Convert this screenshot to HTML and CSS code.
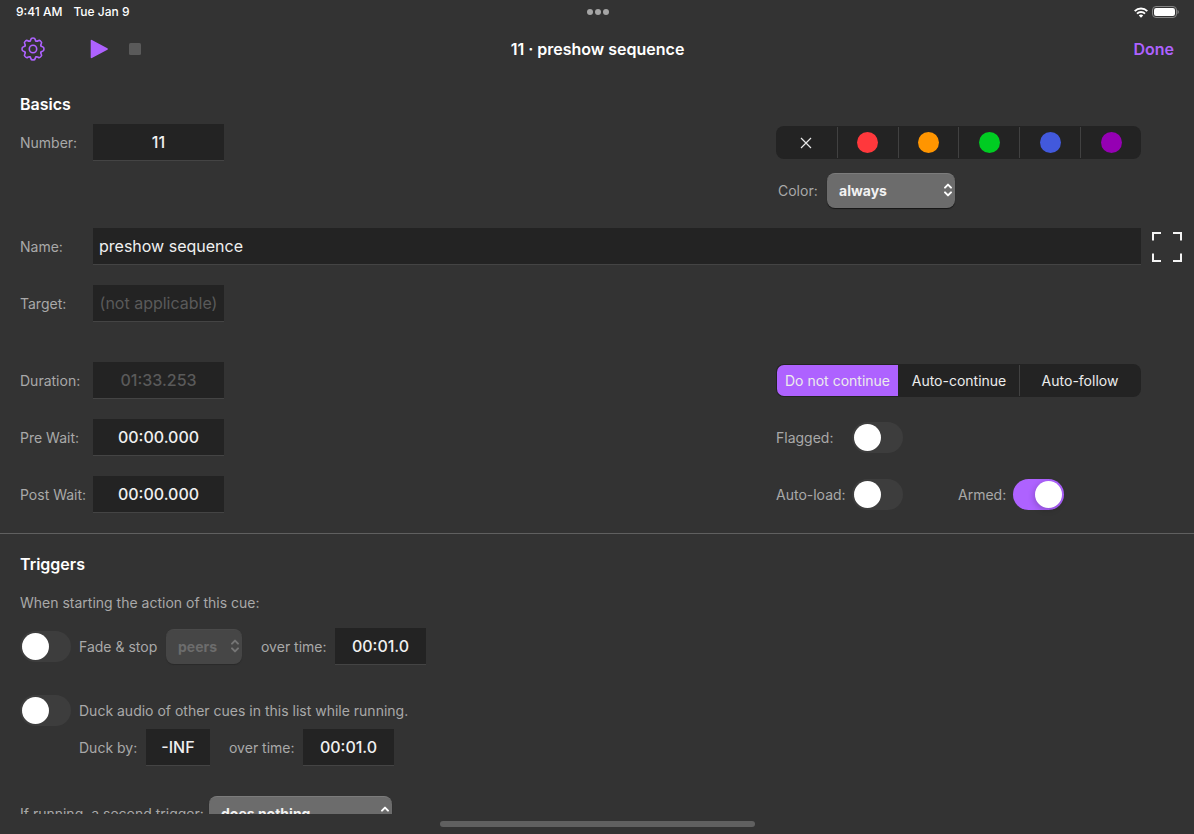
FILE: index.html
```html
<!DOCTYPE html>
<html lang="en">
<head>
<meta charset="utf-8">
<meta name="viewport" content="width=device-width, initial-scale=1">
<title>11 · preshow sequence</title>
<link rel="stylesheet" href="styles.css">
</head>
<body>
<svg class="defs" width="0" height="0" aria-hidden="true">
  <symbol id="chevrons" viewBox="0 0 10 16">
    <path d="M2 5.6 5 2.6l3 3M2 10.4l3 3 3-3" fill="none" stroke="currentColor" stroke-width="2" stroke-linecap="round" stroke-linejoin="round"/>
  </symbol>
  <symbol id="tooth" viewBox="-12 -12 24 24">
    <path d="M-3.250-7.850C-2.500-8.160-2.350-8.600-2.200-9.500-2-10.700-1.500-11 0-11S2-10.700 2.200-9.500C2.350-8.600 2.500-8.160 3.250-7.850" fill="none" stroke="currentColor" stroke-width="1.600" stroke-linecap="round"/>
  </symbol>
</svg>
<div class="screen">
  <div class="status">
    <div class="status-time"><span>9:41 AM</span><span>Tue Jan 9</span></div>
    <div class="dots"><i></i><i></i><i></i></div>
    <div class="status-icons">
      <svg width="14" height="11" viewBox="0 0 14 11" aria-hidden="true">
        <g fill="none" stroke="#fff" stroke-width="1.9">
          <path d="M.7 4.1a9 9 0 0 1 12.6 0"/>
          <path d="M3 6.6a5.7 5.7 0 0 1 8 0"/>
        </g>
        <path d="M7 10.8 4.8 8.5a3.2 3.2 0 0 1 4.4 0z" fill="#fff"/>
      </svg>
      <svg width="27" height="12" viewBox="0 0 27 12" aria-hidden="true">
        <rect x=".5" y=".5" width="24" height="11" rx="3.5" fill="none" stroke="#858585"/>
        <rect x="2" y="2" width="21" height="8" rx="2.2" fill="#fff"/>
        <path d="M25.5 4v4c.8-.3 1.3-1.100 1.300-2s-.5-1.700-1.300-2z" fill="#858585"/>
      </svg>
    </div>
  </div>

  <header class="toolbar">
    <div class="tools">
      <button class="icon-button" aria-label="Settings">
        <svg class="gear" width="24" height="24" viewBox="-12 -12 24 24" aria-hidden="true">
          <g>
            <use href="#tooth" x="-12" y="-12" width="24" height="24"/>
            <use href="#tooth" x="-12" y="-12" width="24" height="24" transform="rotate(45)"/>
            <use href="#tooth" x="-12" y="-12" width="24" height="24" transform="rotate(90)"/>
            <use href="#tooth" x="-12" y="-12" width="24" height="24" transform="rotate(135)"/>
            <use href="#tooth" x="-12" y="-12" width="24" height="24" transform="rotate(180)"/>
            <use href="#tooth" x="-12" y="-12" width="24" height="24" transform="rotate(225)"/>
            <use href="#tooth" x="-12" y="-12" width="24" height="24" transform="rotate(270)"/>
            <use href="#tooth" x="-12" y="-12" width="24" height="24" transform="rotate(315)"/>
          </g>
          <circle r="3.7" fill="none" stroke="currentColor" stroke-width="1.600"/>
        </svg>
      </button>
      <div class="transport">
        <button class="icon-button" aria-label="Play">
          <svg width="18" height="20" viewBox="0 0 18 20" aria-hidden="true"><path d="M1.500 1.600 17 10 1.500 18.400z" fill="currentColor" stroke="currentColor" stroke-width="1.600" stroke-linejoin="round"/></svg>
        </button>
        <button class="icon-button stop" aria-label="Stop" disabled>
          <svg width="12" height="12" viewBox="0 0 12 12" aria-hidden="true"><rect width="12" height="12" rx="1.500" fill="currentColor"/></svg>
        </button>
      </div>
    </div>
    <h1>11 · preshow sequence</h1>
    <button class="done">Done</button>
  </header>

  <main class="content">
    <section class="basics">
      <h2>Basics</h2>
      <div class="row row-top">
        <div class="field"><label for="number">Number:</label><input class="box" id="number" value="11"></div>
        <div class="side colors">
          <div class="swatches" role="group" aria-label="Cue color">
            <button aria-label="No color"><svg width="12" height="12" viewBox="0 0 12 12" aria-hidden="true"><path d="m1 1 10 10M11 1 1 11" stroke="#e8e8e8" stroke-width="1.200"/></svg></button>
            <button aria-label="Red"><span class="dot red"></span></button>
            <button aria-label="Orange"><span class="dot orange"></span></button>
            <button aria-label="Green"><span class="dot green"></span></button>
            <button aria-label="Blue"><span class="dot blue"></span></button>
            <button aria-label="Purple"><span class="dot purple"></span></button>
          </div>
          <div class="color-mode">
            <label for="color">Color:</label>
            <span class="picker picker-medium"><select id="color"><option>always</option></select><svg width="10" height="16"><use href="#chevrons"/></svg></span>
          </div>
        </div>
      </div>
      <div class="row name-row">
        <div class="field wide"><label for="name">Name:</label><input class="box text" id="name" value="preshow sequence"></div>
        <button class="expand" aria-label="Expand">
          <svg width="30" height="30" viewBox="0 0 30 30" aria-hidden="true"><path d="M1 8.500V1h8M21 1h8v7.500M29 21.500V29h-8M9 29H1v-7.500" fill="none" stroke="#f4f4f4" stroke-width="2"/></svg>
        </button>
      </div>
      <div class="row row-target">
        <div class="field"><label for="target">Target:</label><input class="box target" id="target" value="(not applicable)" disabled></div>
      </div>
      <div class="row">
        <div class="field"><label for="duration">Duration:</label><input class="box" id="duration" value="01:33.253" disabled></div>
        <div class="side segments" role="radiogroup" aria-label="Continue mode">
          <label><input type="radio" name="continue" checked><span>Do not continue</span></label>
          <label><input type="radio" name="continue"><span>Auto-continue</span></label>
          <label><input type="radio" name="continue"><span>Auto-follow</span></label>
        </div>
      </div>
      <div class="row">
        <div class="field"><label for="prewait">Pre Wait:</label><input class="box" id="prewait" value="00:00.000"></div>
        <div class="side switches">
          <label for="flagged">Flagged:</label><input class="switch" type="checkbox" role="switch" id="flagged">
        </div>
      </div>
      <div class="row">
        <div class="field"><label for="postwait">Post Wait:</label><input class="box" id="postwait" value="00:00.000"></div>
        <div class="side switches">
          <label for="autoload">Auto-load:</label><input class="switch" type="checkbox" role="switch" id="autoload">
          <label for="armed">Armed:</label><input class="switch" type="checkbox" role="switch" id="armed" checked>
        </div>
      </div>
    </section>

    <section class="triggers">
      <h2>Triggers</h2>
      <p>When starting the action of this cue:</p>
      <div class="line fade">
        <input class="switch" type="checkbox" role="switch" id="fade">
        <label for="fade">Fade &amp; stop</label>
        <span class="picker picker-small"><select aria-label="Fade and stop" disabled><option>peers</option></select><svg width="10" height="16"><use href="#chevrons"/></svg></span>
        <label class="over" for="fadetime">over time:</label>
        <input class="box time" id="fadetime" value="00:01.0">
      </div>
      <div class="line duck">
        <input class="switch" type="checkbox" role="switch" id="duck">
        <label for="duck">Duck audio of other cues in this list while running.</label>
      </div>
      <div class="line duck-values">
        <label class="by" for="duckby">Duck by:</label>
        <input class="box level" id="duckby" value="-INF">
        <label class="over" for="ducktime">over time:</label>
        <input class="box time" id="ducktime" value="00:01.0">
      </div>
      <div class="line second">
        <label for="second">If running, a second trigger:</label>
        <span class="picker picker-large"><select id="second"><option>does nothing</option></select><svg width="10" height="16"><use href="#chevrons"/></svg></span>
      </div>
    </section>
  </main>
  <footer class="home"><span></span></footer>
</div>
</body>
</html>
```
FILE: styles.css
```css
* { box-sizing: border-box; }

body {
  margin: 0;
  background: #333;
  color: #a9a9a9;
  font: 14px/20px Inter, "Liberation Sans", sans-serif;
}

button, input, select { font: inherit; color: inherit; margin: 0; }
button { padding: 0; border: 0; background: none; display: flex; align-items: center; justify-content: center; }
h1, h2, p { margin: 0; }
.defs { position: absolute; }

.screen { height: 100vh; display: flex; flex-direction: column; }

.status {
  display: grid;
  grid-template-columns: 1fr auto 1fr;
  align-items: center;
  height: 24px;
  padding: 0 15px 0 16px;
  color: #fff;
  font-size: 12px;
  font-weight: 500;
}
.status-time { display: flex; gap: 11px; }
.dots { display: flex; gap: 2px; }
.dots i { width: 6px; height: 6px; border-radius: 50%; background: #a5a5a5; }
.status-icons { display: flex; justify-content: flex-end; align-items: center; gap: 4px; }

.toolbar {
  display: grid;
  grid-template-columns: 1fr auto 1fr;
  align-items: center;
  height: 50px;
  padding: 0 20px 0 21px;
}
.tools { display: flex; align-items: center; gap: 45px; color: #ae62ff; }
.transport { display: flex; align-items: center; gap: 21px; }
.stop { color: #5a5a5a; }
.toolbar h1 { color: #fff; font-size: 16px; font-weight: 600; }
.done { justify-self: end; color: #ae62ff; font-size: 16px; font-weight: 600; }

.content { flex: 1; min-height: 0; overflow: hidden; }
h2 { color: #fff; font-size: 16px; font-weight: 600; line-height: 20px; }

.basics {
  display: flex;
  flex-direction: column;
  gap: 20px;
  padding: 20px 53px 20px 20px;
  border-bottom: 1px solid #606060;
}
.basics h2 { margin-bottom: -10px; }
.row { display: flex; justify-content: space-between; align-items: center; }
.row-top { align-items: flex-start; }
.row-target { margin-bottom: 20px; }
.name-row { margin-right: -41px; gap: 11px; }
.field { display: grid; grid-template-columns: 73px 131px; align-items: center; }
.wide { flex: 1; grid-template-columns: 73px 1fr; }
.side { width: 365px; }

.box {
  width: 100%;
  height: 37px;
  padding: 0 6px;
  border: 0;
  border-bottom: 1px solid #444;
  border-radius: 0;
  background: #232323;
  color: #f0f0f0;
  font-size: 16px;
  font-weight: 500;
  text-align: center;
}
.box.text { text-align: left; font-weight: 400; }
.box:disabled { color: #5a5a5a; opacity: 1; }
.box.target { font-weight: 400; }

.colors { display: flex; flex-direction: column; gap: 14px; padding-top: 2px; }
.swatches {
  display: grid;
  grid-template-columns: repeat(6, 1fr);
  height: 33px;
  padding: 1px 0;
  border-radius: 8px;
  background: #232323;
}
.swatches button + button { border-left: 1px solid #414141; }
.dot { width: 21px; height: 21px; border-radius: 50%; }
.red { background: #ff383c; }
.orange { background: #ff9500; }
.green { background: #00cc22; }
.blue { background: #4259dc; }
.purple { background: #9500b3; }
.color-mode { display: grid; grid-template-columns: 49px auto; align-items: center; justify-content: start; padding-left: 2px; }

.picker { position: relative; display: flex; color: #fff; }
.picker select {
  appearance: none;
  width: 100%;
  height: 35px;
  padding: 0 24px 0 12px;
  border: 0;
  border-top: 1px solid #7c7c7c;
  border-radius: 8px;
  background: #6c6c6c;
  box-shadow: 0 1px 1px #161616;
  color: #f2f2f2;
  font-weight: 700;
}
.picker svg { position: absolute; right: 2px; top: 9px; pointer-events: none; }
.picker-medium { width: 128px; }
.picker-small { width: 76px; color: #757575; }
.picker-large { width: 183px; }
.picker select:disabled { background: #464646; border-top-color: #4a4a4a; box-shadow: 0 1px 1px #2a2a2a; color: #6c6c6c; opacity: 1; }

.segments {
  display: grid;
  grid-template-columns: repeat(3, 1fr);
  height: 33px;
  padding: 1px;
  border-radius: 8px;
  background: #232323;
  color: #ececec;
}
.segments label { display: flex; position: relative; }
.segments label + label { border-left: 1px solid #414141; }
.segments input { position: absolute; opacity: 0; }
.segments span { flex: 1; display: flex; align-items: center; justify-content: center; white-space: nowrap; }
.segments input:checked + span { background: #ae62ff; border-radius: 7px 0 0 7px; }
.segments label:has(:checked) + label { border-left-color: transparent; }

.switches { display: grid; grid-template-columns: 76px 106px 55px auto; align-items: center; justify-content: start; }

.switch {
  appearance: none;
  flex: none;
  width: 51px;
  height: 31px;
  padding: 2px;
  border-radius: 16px;
  background: #3d3d3d;
}
.switch::before {
  content: "";
  display: block;
  width: 27px;
  height: 27px;
  border-radius: 50%;
  background: #fff;
}
.switch:checked { background: #ae62ff; }
.switch:checked::before { margin-left: auto; box-shadow: -1px 2px 6px rgba(0, 0, 0, .2); }

.triggers { padding: 20px 20px 0; }
.triggers p { margin: 19px 0 15px; }
.line { display: grid; align-items: center; justify-content: start; white-space: nowrap; }
.fade { grid-template-columns: 59px 87px 76px 93px 91px; }
.duck { grid-template-columns: 59px auto; margin-top: 30px; }
.duck-values { grid-template-columns: 67px 64px 93px 91px; margin: 3px 0 30px 59px; }
.second { grid-template-columns: 189px auto; }
.over { padding-left: 19px; }

.home { flex: none; height: 20px; display: flex; justify-content: center; padding-top: 7px; }
.home span { width: 315px; height: 6px; border-radius: 3px; background: #606060; }
```
